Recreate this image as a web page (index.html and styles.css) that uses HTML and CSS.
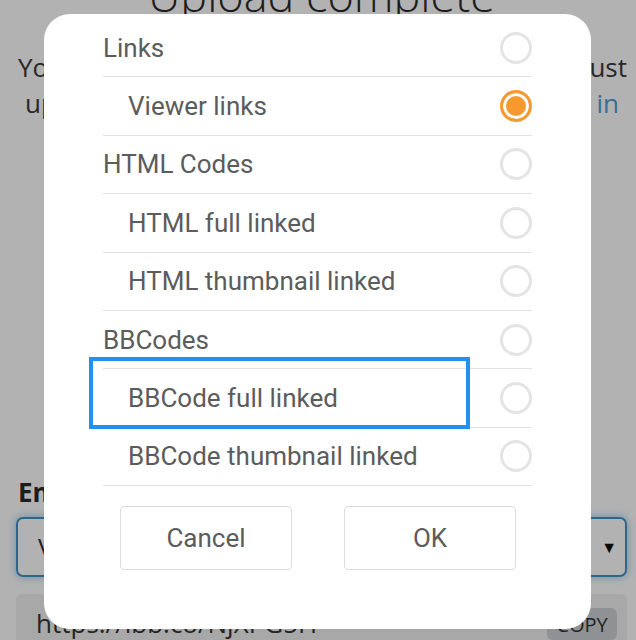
FILE: index.html
```html
<!DOCTYPE html>
<html lang="en">
<head>
    <meta charset="UTF-8">
    <meta name="viewport" content="width=device-width, initial-scale=1.0">
    <title>Upload complete</title>
    <link rel="stylesheet" href="styles.css">
</head>
<body>
    <div class="page">
        <h1 class="page-title">Upload complete</h1>
        <p class="page-text">
            <span class="line line-1">You can share your image now, but you must</span>
            <span class="line line-2">upload as a member to keep it. Join or <a href="#">sign in</a></span>
        </p>

        <div class="embed">
            <label class="embed-label" for="embed-select">Embed codes</label>
            <div class="select-box">
                <span id="embed-select">Viewer links</span>
                <span class="select-arrow">▼</span>
            </div>
            <div class="copy-field">
                <span class="copy-url">https://ibb.co/NjXPG5H</span>
                <button class="copy-btn">COPY</button>
            </div>
        </div>
    </div>

    <div class="overlay"></div>

    <div class="dialog">
        <ul class="options">
            <li class="option"><span>Links</span><span class="radio"></span></li>
            <li class="option sub"><span>Viewer links</span><span class="radio checked"></span></li>
            <li class="option"><span>HTML Codes</span><span class="radio"></span></li>
            <li class="option sub"><span>HTML full linked</span><span class="radio"></span></li>
            <li class="option sub"><span>HTML thumbnail linked</span><span class="radio"></span></li>
            <li class="option"><span>BBCodes</span><span class="radio"></span></li>
            <li class="option sub"><span>BBCode full linked</span><span class="radio"></span></li>
            <li class="option sub"><span>BBCode thumbnail linked</span><span class="radio"></span></li>
        </ul>

        <div class="dialog-actions">
            <button class="dialog-btn">Cancel</button>
            <button class="dialog-btn">OK</button>
        </div>

        <div class="highlight"></div>
    </div>
</body>
</html>
```

FILE: styles.css
```css
html, body {
    margin: 0;
    height: 100%;
    overflow: hidden;
}

body {
    font-family: 'Open Sans', 'Liberation Sans', sans-serif;
    background: #fff;
    color: #3a3a3a;
}

.page {
    padding: 0 9px 0 16px;
}

.page-title {
    margin: -37px 0 0;
    text-align: center;
    font-weight: 300;
    font-size: 45px;
    line-height: 64px;
    color: #2a2a2a;
}

.page-text {
    margin: 22px 0 0;
    font-size: 26px;
    line-height: 36px;
}

.page-text .line {
    display: block;
    white-space: nowrap;
    text-align: justify;
    text-align-last: justify;
}

.page-text .line-1 {
    margin-left: 2px;
}

.page-text .line-2 {
    margin: 0 8px 0 9px;
}

.page-text a {
    color: #4a9fd6;
    text-decoration: none;
}

.embed {
    margin-top: 354px;
}

.embed-label {
    display: block;
    padding-left: 2px;
    font-weight: 700;
    font-size: 26px;
    line-height: 34px;
    color: #2a2a2a;
}

.select-box {
    display: flex;
    align-items: center;
    justify-content: space-between;
    height: 56px;
    margin-top: 8px;
    padding: 0 8px 0 20px;
    border: 2px solid #3f92c9;
    border-radius: 7px;
    box-shadow: 0 0 8px rgba(80, 160, 220, 0.6);
    font-size: 26px;
    color: #333;
}

.select-arrow {
    font-size: 16px;
    color: #111;
}

.copy-field {
    display: flex;
    justify-content: space-between;
    height: 60px;
    margin-top: 17px;
    padding: 0 10px 0 20px;
    background: #f1f1f1;
    border-radius: 6px;
}

.copy-url {
    align-self: flex-end;
    font-size: 26px;
    line-height: 36px;
    padding-bottom: 13px;
    color: #333;
}

.copy-btn {
    width: 70px;
    height: 32px;
    margin-top: 14px;
    border: none;
    border-radius: 6px;
    background: #cdd2d6;
    font-family: 'Open Sans', sans-serif;
    font-size: 20px;
    color: #333;
    padding: 0;
}

.overlay {
    position: fixed;
    inset: 0;
    background: rgba(0, 0, 0, 0.3);
}

/* dialog sits on top of the dimmed page */
.dialog {
    position: fixed;
    top: 14px;
    left: 44px;
    width: 547px;
    box-sizing: border-box;
    padding: 5px 59px 59px;
    background: #fff;
    border-radius: 26px;
    font-family: Roboto, 'Noto Sans', sans-serif;
    color: #5c5c5c;
}

.options {
    list-style: none;
    margin: 0;
    padding: 0;
}

.option {
    display: flex;
    align-items: center;
    justify-content: space-between;
    height: 58.4px;
    box-sizing: border-box;
    border-bottom: 1px solid #e2e2e2;
    font-size: 26px;
}

.option.sub span:first-child {
    padding-left: 25px;
}

.radio {
    width: 32px;
    height: 32px;
    box-sizing: border-box;
    border: 3px solid #e4e4e4;
    border-radius: 50%;
}

.radio.checked {
    border-color: #f7992f;
    background: #f7992f;
    box-shadow: inset 0 0 0 3px #fff;
}

.dialog-actions {
    display: flex;
    justify-content: space-between;
    padding: 20px 16px 0 17px;
}

.dialog-btn {
    width: 172px;
    height: 64px;
    background: #fff;
    border: 1px solid #dcdcdc;
    border-radius: 4px;
    font-family: Roboto, 'Noto Sans', sans-serif;
    font-size: 26px;
    color: #5c5c5c;
}

.highlight {
    position: absolute;
    left: 45px;
    top: 343px;
    width: 381px;
    height: 72px;
    box-sizing: border-box;
    border: 4px solid #2391ec;
}
```
